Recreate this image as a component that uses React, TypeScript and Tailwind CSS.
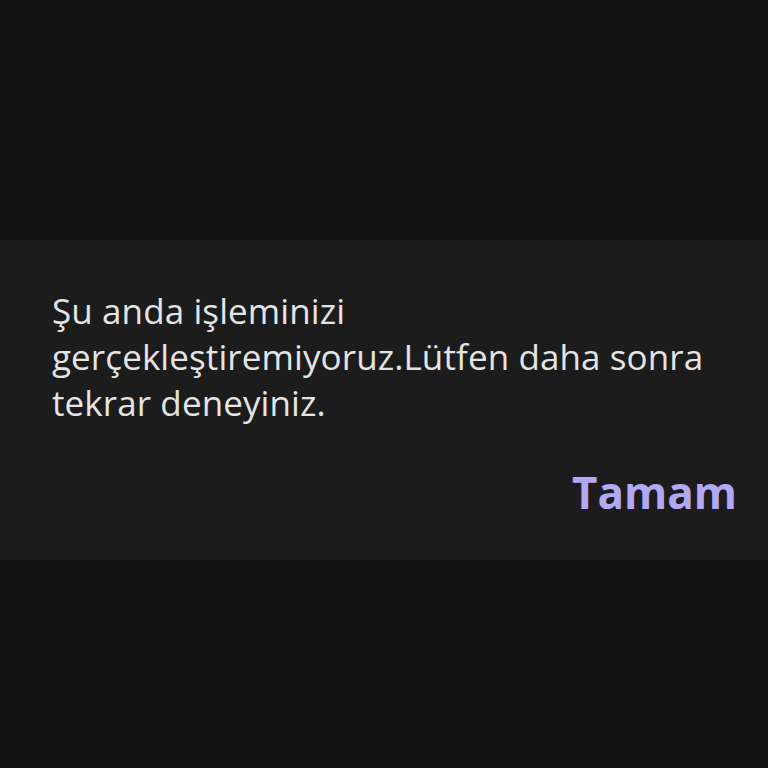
export default function App() {
  return (
    <div className="w-[768px] h-[768px] bg-[#131313] flex flex-col">
      <div className="h-[240px]" />
      <div className="h-[320px] bg-[#1c1c1c] flex flex-col pl-[52px] pr-[31px] pt-[48px]">
        <p className="text-[35px] leading-[46px] tracking-[0.1px] text-[#e4e4e4]" style={{ fontFamily: '"Open Sans", sans-serif' }}>
          Şu anda işleminizi gerçekleştiremiyoruz.Lütfen daha sonra tekrar deneyiniz.
        </p>
        <div className="flex justify-end mt-[41px]">
          <span className="text-[44px] leading-[50px] font-bold text-[#b3a8f4]" style={{ fontFamily: '"Open Sans", sans-serif' }}>
            Tamam
          </span>
        </div>
      </div>
      <div className="flex-1 bg-[#111111]" />
    </div>
  );
}
